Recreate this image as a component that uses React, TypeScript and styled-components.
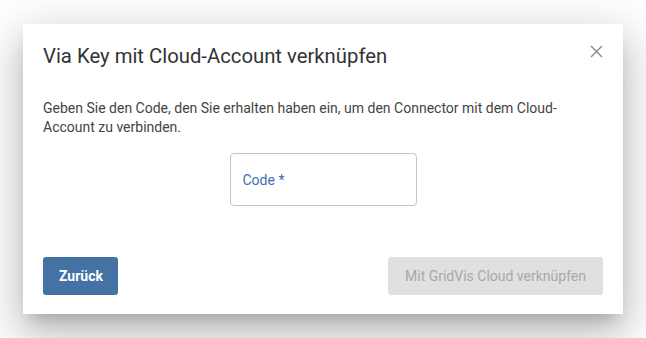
import React from 'react';
import styled, { createGlobalStyle } from 'styled-components';

const GlobalStyle = createGlobalStyle`
    html, body {
        margin: 0;
        padding: 0;
        background: #ffffff;
        font-family: Roboto, "Liberation Sans", sans-serif;
    }
`;

const Page = styled.div`
    width: 646px;
    height: 338px;
    display: flex;
    align-items: center;
    justify-content: center;
`;

const Dialog = styled.div`
    width: 600px;
    box-sizing: border-box;
    background: #ffffff;
    padding: 20px 20px 19px;
    box-shadow: 0 11px 15px -7px rgba(0, 0, 0, 0.2),
        0 24px 38px 3px rgba(0, 0, 0, 0.14), 0 9px 46px 8px rgba(0, 0, 0, 0.12);
`;

const Header = styled.div`
    display: flex;
    justify-content: space-between;
    align-items: flex-start;
`;

const Title = styled.h2`
    margin: 0;
    font-size: 20.3px;
    line-height: 24px;
    font-weight: 400;
    color: #333333;
`;

const CloseButton = styled.button`
    border: none;
    background: none;
    padding: 0;
    margin: -1px -1px 0 0;
    width: 16px;
    height: 16px;
    display: flex;
    align-items: center;
    justify-content: center;
    cursor: pointer;
`;

const Text = styled.p`
    margin: 31px 0 0;
    font-size: 14px;
    line-height: 19px;
    color: #444444;
    max-width: 528px;
`;

const FieldRow = styled.div`
    display: flex;
    justify-content: center;
    margin-top: 16px;
`;

const Field = styled.div`
    width: 187px;
    height: 53px;
    box-sizing: border-box;
    border: 1px solid #c4c4c4;
    border-radius: 4px;
    display: flex;
    align-items: center;
    padding: 0 12px;
`;

const Label = styled.span`
    font-size: 14px;
    color: #3f70b0;
`;

const Actions = styled.div`
    display: flex;
    justify-content: space-between;
    margin-top: 51px;
`;

const Button = styled.button<{ $primary?: boolean }>`
    height: 38px;
    border: none;
    border-radius: 3px;
    padding: 0 16px;
    white-space: nowrap;
    font-family: Roboto, "Liberation Sans", sans-serif;
    font-size: 14px;
    font-weight: ${({ $primary }) => ($primary ? 700 : 400)};
    background: ${({ $primary }) => ($primary ? '#4472a4' : '#e0e0e0')};
    color: ${({ $primary }) => ($primary ? '#ffffff' : '#a8a8a8')};
`;

export default function App() {
    return (
        <>
            <GlobalStyle />
            <Page>
                <Dialog>
                    <Header>
                        <Title>Via Key mit Cloud-Account verknüpfen</Title>
                        <CloseButton aria-label="Schließen">
                            <svg width="13" height="13" viewBox="0 0 13 13">
                                <path d="M1 1L12 12M12 1L1 12" stroke="#8a8a8a" strokeWidth="1.4" />
                            </svg>
                        </CloseButton>
                    </Header>
                    <Text>
                        Geben Sie den Code, den Sie erhalten haben ein, um den Connector mit dem Cloud-Account zu verbinden.
                    </Text>
                    <FieldRow>
                        <Field>
                            <Label>Code *</Label>
                        </Field>
                    </FieldRow>
                    <Actions>
                        <Button $primary style={{ width: 75 }}>Zurück</Button>
                        <Button disabled style={{ width: 215 }}>Mit GridVis Cloud verknüpfen</Button>
                    </Actions>
                </Dialog>
            </Page>
        </>
    );
}
